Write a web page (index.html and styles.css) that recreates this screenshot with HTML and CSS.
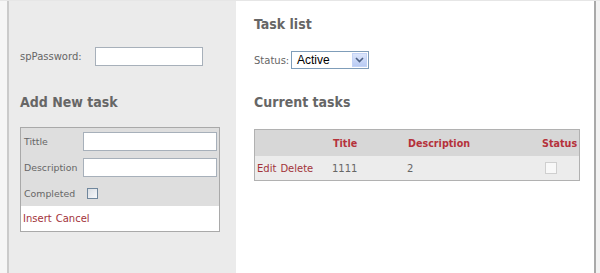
FILE: index.html
```html
<!DOCTYPE html>
<html>
<head>
<meta charset="utf-8">
<link rel="stylesheet" href="styles.css">
</head>
<body>
<div class="page">
  <div class="gutter"></div>
  <aside class="sidebar">
    <div class="pw-row">
      <label class="pw-label">spPassword:</label>
      <span class="textbox pw-input"></span>
    </div>
    <h2 class="heading add-heading">Add New task</h2>
    <div class="form-box">
      <div class="form-fields">
        <div class="form-row">
          <span class="form-label">Tittle</span>
          <span class="textbox field-input"></span>
        </div>
        <div class="form-row">
          <span class="form-label">Description</span>
          <span class="textbox field-input"></span>
        </div>
        <div class="form-row">
          <span class="form-label">Completed</span>
          <span class="check"></span>
        </div>
      </div>
      <div class="form-actions">
        <a class="link">Insert</a> <a class="link">Cancel</a>
      </div>
    </div>
  </aside>
  <main class="content">
    <h2 class="heading list-heading">Task list</h2>
    <div class="status-row">
      <span class="status-label">Status:</span>
      <div class="select">
        <span class="select-text">Active</span>
        <span class="select-btn">
          <svg width="9" height="6" viewBox="0 0 9 6"><path d="M1 1 L4.5 4.5 L8 1" fill="none" stroke="#4d6185" stroke-width="1.6"/></svg>
        </span>
      </div>
    </div>
    <h2 class="heading current-heading">Current tasks</h2>
    <div class="grid">
      <div class="grid-head">
        <span class="cell"></span>
        <span class="cell th">Title</span>
        <span class="cell th">Description</span>
        <span class="cell th">Status</span>
      </div>
      <div class="grid-row">
        <span class="cell"><a class="link">Edit</a> <a class="link">Delete</a></span>
        <span class="cell">1111</span>
        <span class="cell">2</span>
        <span class="cell"><span class="check check-disabled"></span></span>
      </div>
    </div>
  </main>
  <div class="edge"></div>
</div>
</body>
</html>
```

FILE: styles.css
```css
html, body {
  margin: 0;
  padding: 0;
  background: #ffffff;
}
body {
  font-family: "DejaVu Sans", Verdana, sans-serif;
  font-size: 10px;
  color: #666666;
}
.page {
  display: flex;
  height: 273px;
  border-top: 1px solid #e6e6e6;
  box-sizing: border-box;
}
.gutter {
  width: 7px;
  background: #f6f6f6;
}
.sidebar {
  width: 216px;
  background: #ebebeb;
  border-left: 2px solid #cbcbcb;
  padding: 46px 0 0 11px;
  box-sizing: content-box;
}
.pw-row {
  display: flex;
  align-items: center;
  height: 19px;
}
.pw-label {
  width: 75px;
}
.textbox {
  display: block;
  background: #ffffff;
  border: 1px solid #a7b0ba;
  box-sizing: border-box;
}
.pw-input {
  width: 108px;
  height: 19px;
}
.heading {
  font-family: "DejaVu Sans Condensed", "DejaVu Sans", sans-serif;
  font-weight: bold;
  font-size: 14px;
  line-height: 16px;
  color: #666666;
  margin: 0;
}
.add-heading {
  margin-top: 28px;
  margin-bottom: 17px;
}
.form-box {
  width: 200px;
  border: 1px solid #a9a9a9;
  box-sizing: border-box;
  background: #ffffff;
}
.form-fields {
  background: #dedede;
  padding: 0 2px 0 3px;
}
.form-row {
  display: flex;
  align-items: center;
  height: 26px;
}
.form-label {
  width: 59px;
  font-size: 9.4px;
}
.field-input {
  width: 134px;
  height: 19px;
}
.check {
  display: block;
  width: 11px;
  height: 11px;
  box-sizing: border-box;
  border: 1px solid #70879d;
  background: linear-gradient(135deg, #d9dee4, #f7f8fa);
  margin-left: 4px;
}
.form-actions {
  height: 25px;
  display: flex;
  align-items: center;
  padding-left: 2px;
  gap: 4px;
}
.link {
  color: #a2333a;
  text-decoration: none;
}
.content {
  flex: 1;
  padding: 15px 0 0 18px;
  border-right: 2px solid #a9a9a9;
}
.list-heading {
  margin-bottom: 19px;
}
.status-row {
  display: flex;
  align-items: center;
  height: 18px;
}
.status-label {
  width: 37px;
}
.select {
  display: flex;
  align-items: center;
  width: 78px;
  height: 18px;
  box-sizing: border-box;
  border: 1px solid #7f9db9;
  background: #ffffff;
  padding: 1px;
}
.select-text {
  flex: 1;
  font-family: "Liberation Sans", Arial, sans-serif;
  font-size: 12px;
  color: #000000;
  padding-left: 4px;
  line-height: 14px;
}
.select-btn {
  width: 15px;
  height: 14px;
  display: flex;
  align-items: center;
  justify-content: center;
  background: linear-gradient(#dbe5fb, #b9cbf3);
  border: 1px solid #c3d3f6;
  box-sizing: border-box;
}
.current-heading {
  margin-top: 25px;
  margin-bottom: 19px;
}
.grid {
  width: 326px;
  border: 1px solid #b1b1b1;
  box-sizing: border-box;
}
.grid-head, .grid-row {
  display: grid;
  grid-template-columns: 75px 75px 134px 1fr;
  align-items: center;
}
.grid-head {
  height: 26px;
  background: #d7d7d7;
}
.grid-row {
  height: 24px;
  background: #ececec;
}
.cell {
  padding-left: 2px;
  display: flex;
  align-items: center;
  gap: 4px;
}
.th {
  color: #b5323b;
  font-weight: bold;
  font-size: 9.6px;
  padding-left: 3px;
}
.check-disabled {
  width: 12px;
  height: 12px;
  border: 1px solid #cfcfcf;
  background: #f8f8f8;
  margin-left: 4px;
}
.edge {
  width: 4px;
  background: #f2f2f2;
}
```
